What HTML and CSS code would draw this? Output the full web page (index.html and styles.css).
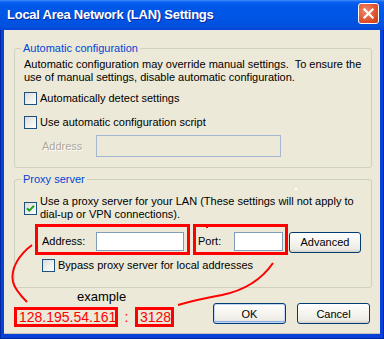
FILE: index.html
```html
<!DOCTYPE html>
<html>
<head>
<meta charset="utf-8">
<link rel="stylesheet" href="styles.css">
</head>
<body>
<div class="window">
  <div class="titlebar">
    <span class="title">Local Area Network (LAN) Settings</span>
    <span class="close"><svg width="13" height="13" viewBox="0 0 13 13"><path d="M2.5 2.5 L10.5 10.5 M10.5 2.5 L2.5 10.5" stroke="#fff" stroke-width="2.2" stroke-linecap="square"/></svg></span>
  </div>
  <div class="client">
    <fieldset class="group g1">
      <legend>Automatic configuration</legend>
      <div class="gbody g1body">
        <p class="desc">Automatic configuration may override manual settings.&nbsp; To ensure the<br>use of manual settings, disable automatic configuration.</p>
        <div class="check row1"><span class="box"></span><span>Automatically detect settings</span></div>
        <div class="check row2"><span class="box"></span><span>Use automatic configuration script</span></div>
        <div class="addr-row">
          <span class="dis-label">Address</span>
          <span class="input dis-input"></span>
        </div>
      </div>
    </fieldset>
    <fieldset class="group g2">
      <legend>Proxy server</legend>
      <div class="gbody g2body">
        <div class="check multi"><span class="box checked"><svg width="11" height="11" viewBox="0 0 11 11"><path d="M2 5.2 L4.3 7.6 L9 2.8" fill="none" stroke="#21A121" stroke-width="2"/></svg></span><span>Use a proxy server for your LAN (These settings will not apply to<br>dial-up or VPN connections).</span></div>
        <div class="proxy-row">
          <div class="redbox addr-box">
            <span class="plabel alabel">Address:</span>
            <span class="input ainput"></span>
          </div>
          <div class="redbox port-box">
            <span class="plabel portlabel">Port:</span>
            <span class="input pinput"></span>
          </div>
          <span class="btn adv">Advanced</span>
        </div>
        <div class="check bypass"><span class="box"></span><span>Bypass proxy server for local addresses</span></div>
      </div>
    </fieldset>
    <div class="footer">
      <div class="example">
        <div class="ex-label">example</div>
        <div class="nums">
          <span class="num ip">128.195.54.161</span>
          <span class="colon">:</span>
          <span class="num port">3128</span>
        </div>
      </div>
      <span class="btn ok">OK</span>
      <span class="btn cancel">Cancel</span>
    </div>
  </div>
  <svg class="annot" width="384" height="339" viewBox="0 0 384 339">
    <path d="M32 245 C20 254, 10 268, 13 282 C15 290, 22 297, 27 302" fill="none" stroke="#f00" stroke-width="2"/>
    <path d="M273 263 C262 279, 246 290, 222 295 C200 299, 188 302, 178 305" fill="none" stroke="#f00" stroke-width="2"/>
    <rect x="206" y="227" width="2" height="1" fill="#f00"/>
    <rect x="295" y="188" width="2" height="2" fill="#fff"/>
  </svg>
</div>
</body>
</html>
```

FILE: styles.css
```css
html, body {
  margin: 0;
  padding: 0;
  background: #fff;
}

.window {
  position: relative;
  width: 384px;
  height: 339px;
  background: #0841D8;
  box-shadow: inset 1px 0 0 #0026A0, inset -1px 0 0 #0026A0, inset 0 -1px 0 #0026A0;
  font-family: "Liberation Sans", Arial, sans-serif;
  font-size: 11px;
  color: #000;
  overflow: hidden;
}

.titlebar {
  height: 30px;
  box-sizing: border-box;
  display: flex;
  align-items: center;
  padding: 0 5px 0 7px;
  background: linear-gradient(#3D8EF9 0px, #0B61EE 2px, #0058E8 6px, #0054E3 20px, #0050DC 27px, #0843DA 30px);
}

.title {
  flex: 1;
  color: #fff;
  font-weight: bold;
  font-size: 13px;
  letter-spacing: -0.25px;
  padding-bottom: 2px;
  text-shadow: 1px 1px 0 #0A2A9C;
}

.close {
  width: 21px;
  height: 21px;
  box-sizing: border-box;
  border: 1px solid #fff;
  border-radius: 3px;
  background: radial-gradient(circle at 35% 35%, #F08A6C, #E0502C 60%, #C63B16);
  display: flex;
  align-items: center;
  justify-content: center;
  margin-bottom: 3px;
}

.client {
  background: #ECE9D8;
  margin: 0 4px;
  height: 304px;
  box-sizing: border-box;
  padding: 12px 8px 0 10px;
  box-shadow: inset 0 -1px 0 #C6C3B4;
}

.group {
  margin: 0;
  padding: 0;
  border: 1px solid #D0D0BF;
  border-radius: 3px;
  min-width: 0;
}

.group legend {
  color: #0046D5;
  padding: 0 2px;
  margin-left: 6px;
  line-height: 13px;
}

.g2 {
  margin-top: 5px;
}

.gbody {
  line-height: 13px;
}

.g1body {
  padding: 3px 8px 10px 9px;
}

.desc {
  margin: 0;
}

.check {
  display: flex;
  align-items: center;
  gap: 3px;
}

.box {
  width: 13px;
  height: 13px;
  box-sizing: border-box;
  border: 1px solid #1C5180;
  background: linear-gradient(135deg, #DCDCD7, #FFFFFF);
  display: flex;
  align-items: center;
  justify-content: center;
  flex: none;
}

.row1 {
  margin-top: 8px;
}

.row2 {
  margin-top: 11px;
}

.addr-row {
  display: flex;
  align-items: center;
  margin-top: 6px;
  padding-left: 18px;
}

.dis-label {
  width: 54px;
  color: #ACA899;
  text-shadow: 1px 1px 0 #fff;
}

.input {
  display: block;
  box-sizing: border-box;
  border: 1px solid #7F9DB9;
  background: #fff;
}

.dis-input {
  width: 185px;
  height: 22px;
  background: #ECE9D8;
  border-color: #A5B8D0;
}

.g2body {
  padding: 9px 8px 15px 9px;
}

.proxy-row {
  display: flex;
  align-items: flex-start;
  margin-top: 3px;
  margin-left: 11px;
}

.redbox {
  display: flex;
  align-items: flex-start;
  height: 31px;
  box-sizing: border-box;
  border: 3px solid #FF0000;
  padding-top: 5px;
}

.addr-box {
  width: 155px;
  padding-left: 4px;
}

.port-box {
  width: 95px;
  margin-left: 3px;
  padding-left: 2px;
}

.plabel {
  line-height: 19px;
}

.alabel {
  width: 54px;
}

.portlabel {
  width: 36px;
}

.ainput {
  width: 88px;
  height: 19px;
}

.pinput {
  width: 49px;
  height: 19px;
}

.btn {
  display: flex;
  align-items: center;
  justify-content: center;
  box-sizing: border-box;
  border: 1px solid #003C74;
  border-radius: 3px;
  background: linear-gradient(#FFFFFF 0%, #F5F4EF 50%, #ECEBE4 85%, #D6D0C5 100%);
  height: 21px;
}

.adv {
  width: 72px;
  margin-left: 1px;
  margin-top: 8px;
}

.bypass {
  margin-top: 4px;
  margin-left: 18px;
}

.footer {
  display: flex;
  align-items: flex-start;
}

.example {
  flex: 1;
}

.ex-label {
  margin-top: 1px;
  margin-left: 63px;
  font-size: 13px;
  line-height: 15px;
}

.nums {
  display: flex;
  align-items: center;
  margin-top: 3px;
  color: #FF0000;
}

.num {
  display: block;
  box-sizing: border-box;
  height: 20px;
  border: 3px solid #FF0000;
  font-size: 14px;
  line-height: 14px;
  padding: 0 0 0 2px;
  white-space: nowrap;
}

.ip {
  width: 104px;
}

.colon {
  width: 17px;
  text-align: center;
  font-size: 14px;
  line-height: 14px;
}

.port {
  width: 39px;
}

.ok {
  width: 73px;
  margin-top: 15px;
  box-shadow: inset 0 0 0 1px #C2D6F6, inset 0 -1px 0 1px #89ADE4;
}

.cancel {
  width: 73px;
  margin-top: 15px;
  margin-left: 11px;
  margin-right: 2px;
}

.annot {
  position: absolute;
  left: 0;
  top: 0;
  pointer-events: none;
}
```
